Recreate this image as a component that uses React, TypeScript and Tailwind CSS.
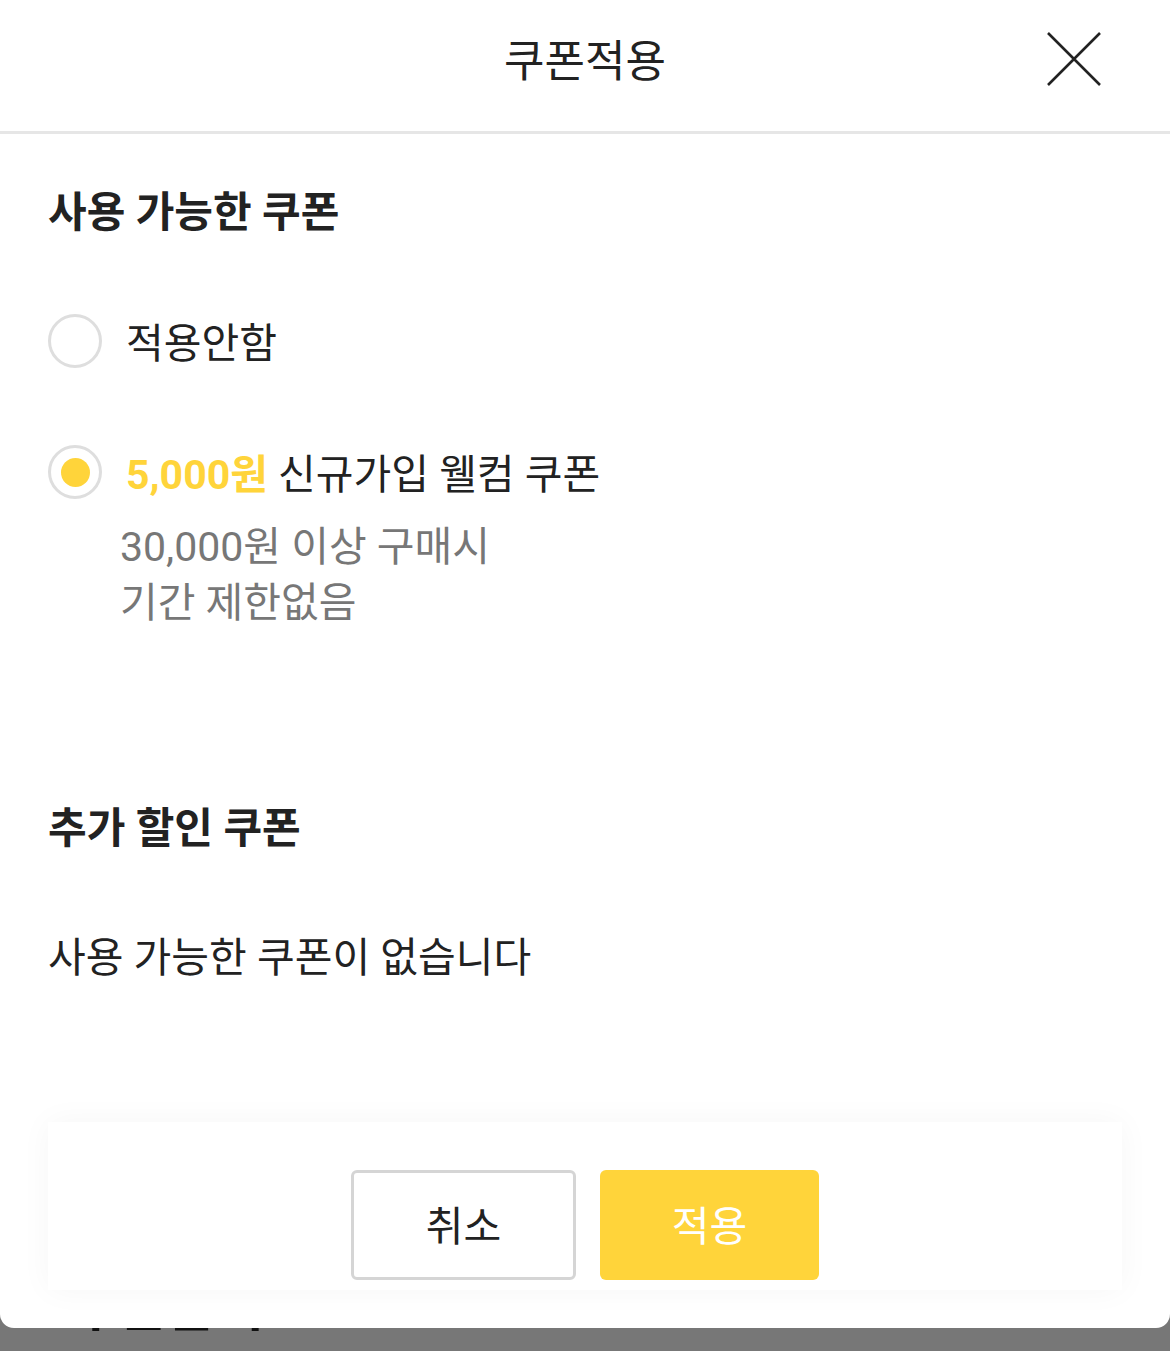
import { useState } from 'react';

const font = { fontFamily: 'Roboto, "Noto Sans CJK KR", "Noto Sans", sans-serif' };

interface RadioRowProps {
  checked: boolean;
  onSelect: () => void;
  children: React.ReactNode;
}

function RadioRow({ checked, onSelect, children }: RadioRowProps) {
  return (
    <button onClick={onSelect} className="flex h-[60px] items-center text-left">
      <span className="flex h-[54px] w-[54px] shrink-0 items-center justify-center rounded-full border-[3px] border-[#dedede] bg-white">
        {checked && <span className="h-[29px] w-[29px] rounded-full bg-[#ffd43a]" />}
      </span>
      <span className="ml-[24px] pt-[5px] text-[41px] leading-[60px] text-[#222]">{children}</span>
    </button>
  );
}

export default function App() {
  const [selected, setSelected] = useState<'none' | 'welcome'>('welcome');

  return (
    <div className="h-[1351px] w-[1170px] overflow-hidden bg-[#777]" style={font}>
      {/* 모달 */}
      <div className="relative z-10 h-[1328px] rounded-b-[14px] bg-white">
        <div className="relative flex h-[134px] items-center justify-center border-b-[3px] border-[#e6e6e6] pb-[8px]">
          <h1 className="text-[44px] font-normal leading-none text-[#222]">쿠폰적용</h1>
          <button className="absolute right-[67px] top-[30px] p-[2px]" aria-label="닫기">
            <svg width="54" height="54" viewBox="0 0 54 54" fill="none">
              <path d="M1 1L53 53M53 1L1 53" stroke="#222" strokeWidth="2.6" />
            </svg>
          </button>
        </div>

        <div className="px-[48px]">
          <h2 className="mt-[49px] text-[42px] font-bold leading-[60px] text-[#222]">사용 가능한 쿠폰</h2>

          <div className="mt-[68px]">
            <RadioRow checked={selected === 'none'} onSelect={() => setSelected('none')}>
              적용안함
            </RadioRow>
          </div>

          <div className="mt-[71px]">
            <RadioRow checked={selected === 'welcome'} onSelect={() => setSelected('welcome')}>
              <span className="font-bold text-[#ffd43a]">5,000원</span> 신규가입 웰컴 쿠폰
            </RadioRow>
            <div className="ml-[72px] mt-[17px] text-[41px] leading-[56px] text-[#777]">
              <p>30,000원 이상 구매시</p>
              <p>기간 제한없음</p>
            </div>
          </div>

          <h2 className="mt-[168px] text-[42px] font-bold leading-[60px] text-[#222]">추가 할인 쿠폰</h2>

          <p className="mt-[69px] text-[41px] leading-[60px] text-[#222]">사용 가능한 쿠폰이 없습니다</p>

          <div className="mt-[134px] flex justify-center gap-[24px] bg-white pb-[10px] pt-[48px] shadow-[0_0_30px_rgba(0,0,0,0.04)]">
            <button className="h-[110px] w-[225px] rounded-[6px] border-[3px] border-[#d5d5d5] bg-white pt-[5px] text-[41px] text-[#222]">
              취소
            </button>
            <button className="h-[110px] w-[219px] rounded-[6px] bg-[#ffd43a] pt-[5px] text-[41px] text-white">적용</button>
          </div>
        </div>
      </div>

      {/* 모달 뒤 페이지 */}
      <div className="-mt-[49px] pl-[72px] text-[52px] font-bold leading-[60px] text-[#111]">주문금액</div>
    </div>
  );
}
